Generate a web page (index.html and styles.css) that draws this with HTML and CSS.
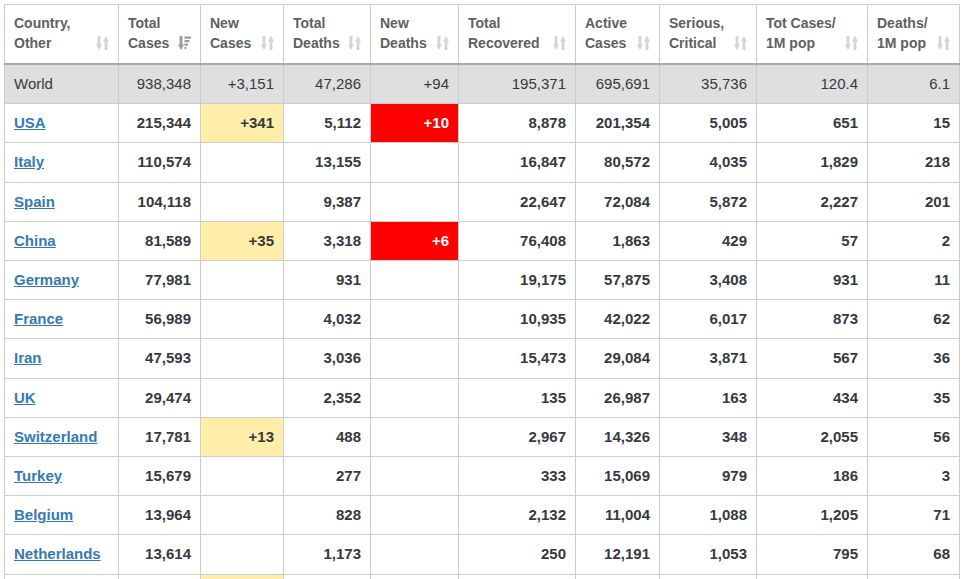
FILE: index.html
```html
<!DOCTYPE html>
<html lang="en">
<head>
<meta charset="utf-8">
<title>Coronavirus Cases</title>
<link rel="stylesheet" href="styles.css">
</head>
<body>
<svg class="defs" aria-hidden="true">
  <symbol id="sort-both" viewBox="0 0 13 14">
    <rect x="1.6" y="0" width="2.8" height="9.2"/>
    <polygon points="0,8.6 6,8.6 3,14"/>
    <polygon points="7,5.4 13,5.4 10,0"/>
    <rect x="8.6" y="4.8" width="2.8" height="9.2"/>
  </symbol>
  <symbol id="sort-desc" viewBox="0 0 13 14">
    <rect x="1.6" y="0" width="2.8" height="9.2"/>
    <polygon points="0,8.6 6,8.6 3,14"/>
    <rect x="6.5" y="0.5" width="6.5" height="2.2"/>
    <rect x="6.5" y="4" width="5" height="2.2"/>
    <rect x="6.5" y="7.5" width="3.5" height="2.2"/>
    <rect x="6.5" y="11" width="2" height="2.2"/>
  </symbol>
</svg>
<table class="cases">
  <colgroup>
    <col class="c1"><col class="c2"><col class="c3"><col class="c4"><col class="c5">
    <col class="c6"><col class="c7"><col class="c8"><col class="c9"><col class="c10">
  </colgroup>
  <thead>
    <tr>
      <th><div class="hd"><span>Country,<br>Other</span><svg class="sort"><use href="#sort-both"/></svg></div></th>
      <th><div class="hd"><span>Total<br>Cases</span><svg class="sort active"><use href="#sort-desc"/></svg></div></th>
      <th><div class="hd"><span>New<br>Cases</span><svg class="sort"><use href="#sort-both"/></svg></div></th>
      <th><div class="hd"><span>Total<br>Deaths</span><svg class="sort"><use href="#sort-both"/></svg></div></th>
      <th><div class="hd"><span>New<br>Deaths</span><svg class="sort"><use href="#sort-both"/></svg></div></th>
      <th><div class="hd"><span>Total<br>Recovered</span><svg class="sort"><use href="#sort-both"/></svg></div></th>
      <th><div class="hd"><span>Active<br>Cases</span><svg class="sort"><use href="#sort-both"/></svg></div></th>
      <th><div class="hd"><span>Serious,<br>Critical</span><svg class="sort"><use href="#sort-both"/></svg></div></th>
      <th><div class="hd"><span>Tot&nbsp;Cases/<br>1M pop</span><svg class="sort"><use href="#sort-both"/></svg></div></th>
      <th><div class="hd"><span>Deaths/<br>1M pop</span><svg class="sort"><use href="#sort-both"/></svg></div></th>
    </tr>
  </thead>
  <tbody>
    <tr class="world">
      <td>World</td><td>938,348</td><td>+3,151</td><td>47,286</td><td>+94</td><td>195,371</td><td>695,691</td><td>35,736</td><td>120.4</td><td>6.1</td>
    </tr>
    <tr>
      <td><a href="#">USA</a></td><td>215,344</td><td class="new">+341</td><td>5,112</td><td class="dead">+10</td><td>8,878</td><td>201,354</td><td>5,005</td><td>651</td><td>15</td>
    </tr>
    <tr>
      <td><a href="#">Italy</a></td><td>110,574</td><td></td><td>13,155</td><td></td><td>16,847</td><td>80,572</td><td>4,035</td><td>1,829</td><td>218</td>
    </tr>
    <tr>
      <td><a href="#">Spain</a></td><td>104,118</td><td></td><td>9,387</td><td></td><td>22,647</td><td>72,084</td><td>5,872</td><td>2,227</td><td>201</td>
    </tr>
    <tr>
      <td><a href="#">China</a></td><td>81,589</td><td class="new">+35</td><td>3,318</td><td class="dead">+6</td><td>76,408</td><td>1,863</td><td>429</td><td>57</td><td>2</td>
    </tr>
    <tr>
      <td><a href="#">Germany</a></td><td>77,981</td><td></td><td>931</td><td></td><td>19,175</td><td>57,875</td><td>3,408</td><td>931</td><td>11</td>
    </tr>
    <tr>
      <td><a href="#">France</a></td><td>56,989</td><td></td><td>4,032</td><td></td><td>10,935</td><td>42,022</td><td>6,017</td><td>873</td><td>62</td>
    </tr>
    <tr>
      <td><a href="#">Iran</a></td><td>47,593</td><td></td><td>3,036</td><td></td><td>15,473</td><td>29,084</td><td>3,871</td><td>567</td><td>36</td>
    </tr>
    <tr>
      <td><a href="#">UK</a></td><td>29,474</td><td></td><td>2,352</td><td></td><td>135</td><td>26,987</td><td>163</td><td>434</td><td>35</td>
    </tr>
    <tr>
      <td><a href="#">Switzerland</a></td><td>17,781</td><td class="new">+13</td><td>488</td><td></td><td>2,967</td><td>14,326</td><td>348</td><td>2,055</td><td>56</td>
    </tr>
    <tr>
      <td><a href="#">Turkey</a></td><td>15,679</td><td></td><td>277</td><td></td><td>333</td><td>15,069</td><td>979</td><td>186</td><td>3</td>
    </tr>
    <tr>
      <td><a href="#">Belgium</a></td><td>13,964</td><td></td><td>828</td><td></td><td>2,132</td><td>11,004</td><td>1,088</td><td>1,205</td><td>71</td>
    </tr>
    <tr>
      <td><a href="#">Netherlands</a></td><td>13,614</td><td></td><td>1,173</td><td></td><td>250</td><td>12,191</td><td>1,053</td><td>795</td><td>68</td>
    </tr>
    <tr class="partial">
      <td></td><td></td><td class="new"></td><td></td><td></td><td></td><td></td><td></td><td></td><td></td>
    </tr>
  </tbody>
</table>
</body>
</html>
```

FILE: styles.css
```css
html, body {
  margin: 0;
  padding: 0;
  background: #ffffff;
}

body {
  padding: 4px;
  font-family: "Liberation Sans", Arial, Helvetica, sans-serif;
  color: #363940;
}

.defs {
  width: 0;
  height: 0;
  position: absolute;
  overflow: hidden;
}

.cases {
  border-collapse: collapse;
  table-layout: fixed;
  width: 955px;
}

.c1 { width: 114px; }
.c2 { width: 82px; }
.c3 { width: 83px; }
.c4 { width: 87px; }
.c5 { width: 88px; }
.c6 { width: 117px; }
.c7 { width: 84px; }
.c8 { width: 97px; }
.c9 { width: 111px; }
.c10 { width: 92px; }

.cases th,
.cases td {
  border: 1px solid #cccccc;
}

.cases th {
  padding: 8px 9px 10px 9px;
  text-align: left;
  vertical-align: top;
  font-size: 14px;
  line-height: 20px;
  font-weight: bold;
  color: #606060;
  border-bottom: 2px solid #a9a9a9;
  white-space: nowrap;
}

.hd {
  display: flex;
  align-items: flex-end;
  justify-content: space-between;
}

.sort {
  flex: none;
  width: 13px;
  height: 14px;
  margin-bottom: 3px;
  fill: #d4d4d4;
}

.sort.active {
  fill: #9c9c9c;
}

.cases td {
  padding: 8px 9px;
  font-size: 15px;
  line-height: 22.2px;
  font-weight: bold;
  text-align: right;
  white-space: nowrap;
}

.cases td:first-child {
  text-align: left;
}

.cases a {
  color: #337ab7;
  text-decoration: underline;
}

.world td {
  background: #dfdfdf;
  font-weight: normal;
}

.cases td.new {
  background: #ffeeaa;
}

.cases td.dead {
  background: #ff0000;
  color: #ffffff;
}
```
